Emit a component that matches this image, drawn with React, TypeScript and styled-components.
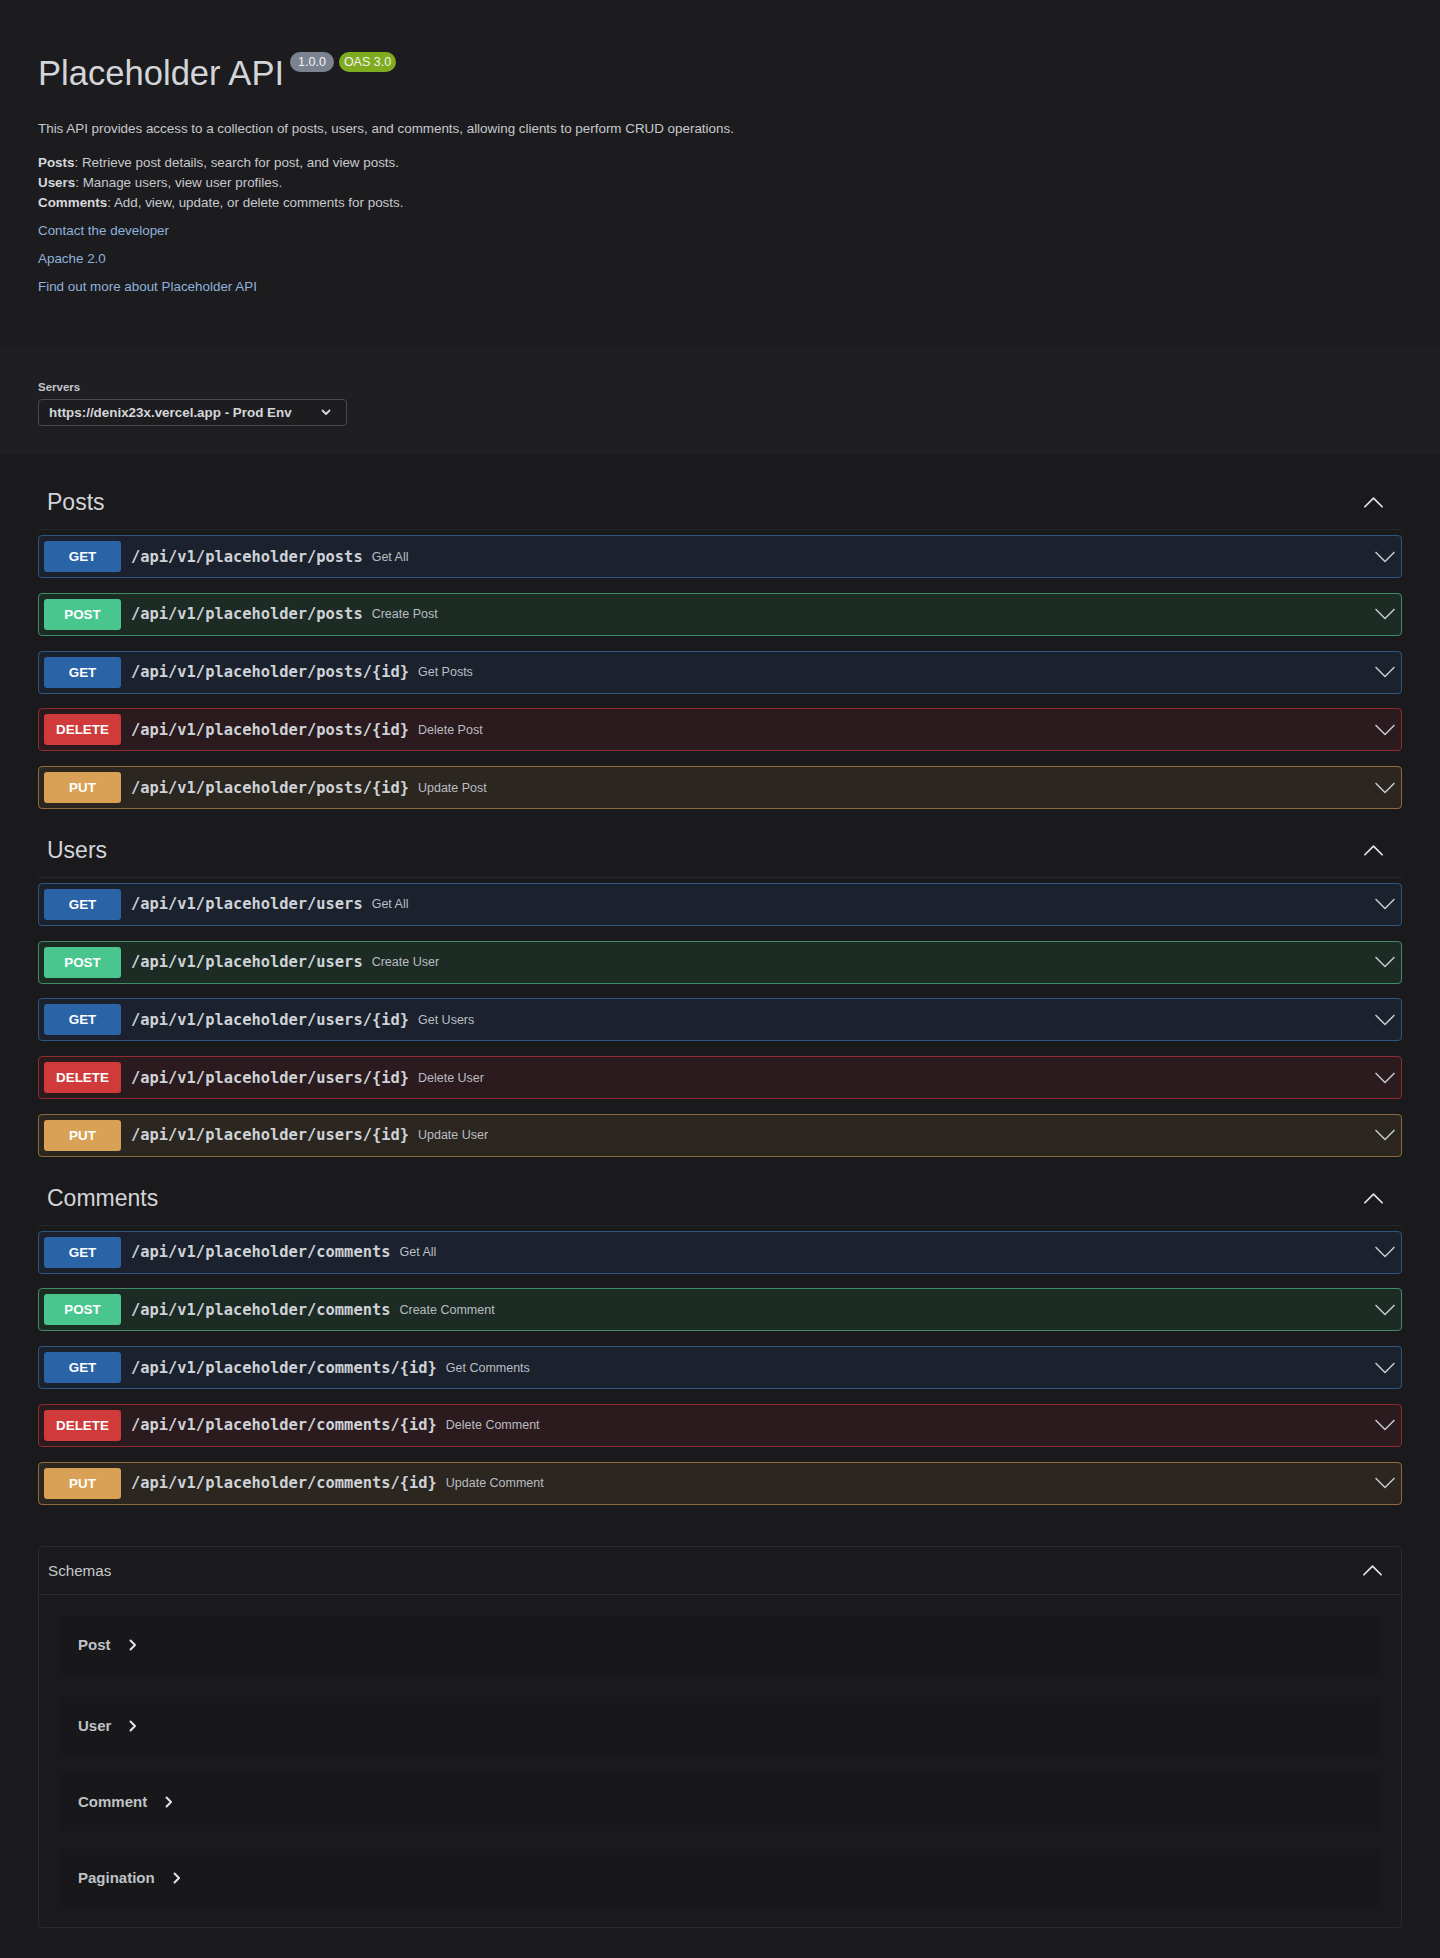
import React from "react";
import styled, { createGlobalStyle } from "styled-components";

const GlobalStyle = createGlobalStyle`
  html, body { margin: 0; padding: 0; }
  body {
    background: #1a1a1c;
    font-family: "Liberation Sans", Arial, sans-serif;
    color: #c8cacf;
  }
  * { box-sizing: border-box; }
`;

type Method = "GET" | "POST" | "DELETE" | "PUT";

const METHOD_COLORS: Record<Method, { bg: string; border: string; badge: string }> = {
  GET: { bg: "#1b222e", border: "#2f5681", badge: "#2a64a6" },
  POST: { bg: "#1d2b25", border: "#3e8d68", badge: "#48c68d" },
  DELETE: { bg: "#2b1b1e", border: "#8e2c31", badge: "#d03a3b" },
  PUT: { bg: "#2b2720", border: "#8e6b3d", badge: "#d9a155" },
};

const Page = styled.div`
  width: 1440px;
  min-height: 1958px;
  background: #1a1a1c;
`;

const InfoSection = styled.section`
  background: #1c1c1f;
  padding: 52px 38px 49px;
`;

const TitleRow = styled.div`
  display: flex;
  align-items: flex-start;
  gap: 5px;
`;

const Title = styled.h2`
  margin: 4px 1px 0 0;
  font-size: 34.6px;
  line-height: 35px;
  font-weight: 400;
  color: #d3d5d9;
`;

const VersionBadge = styled.span<{ $tone: "gray" | "green" }>`
  display: inline-flex;
  align-items: center;
  height: 20px;
  padding: 0 ${(p) => (p.$tone === "gray" ? "8px" : "5px")};
  border-radius: 10px;
  font-size: 12.5px;
  color: #f2f2f2;
  background: ${(p) => (p.$tone === "gray" ? "#7c8390" : "#7fac1f")};
`;

const Description = styled.p`
  margin: 28px 0 14px;
  font-size: 13.4px;
  line-height: 20px;
  color: #c7c9cd;
`;

const TagList = styled.div`
  font-size: 13.4px;
  line-height: 20px;
  color: #c7c9cd;

  b {
    color: #d6d8dc;
  }
`;

const InfoLink = styled.a`
  display: block;
  margin-top: 8px;
  font-size: 13.4px;
  line-height: 20px;
  color: #8fb1dc;
  text-decoration: none;
`;

const ServersBand = styled.section`
  background: #1f1f23;
  padding: 33px 38px 29px;
`;

const ServersLabel = styled.div`
  font-size: 11.5px;
  line-height: 16px;
  font-weight: 700;
  color: #c3c5ca;
  margin-bottom: 4px;
`;

const ServerSelect = styled.div`
  width: 309px;
  height: 27px;
  display: flex;
  align-items: center;
  justify-content: space-between;
  padding: 0 15px 0 10px;
  border: 1px solid #494b51;
  border-radius: 4px;
  background: #1d1d20;
  font-size: 13.4px;
  font-weight: 700;
  color: #d4d6da;
`;

const Main = styled.main`
  padding: 21px 38px 30px;
`;

const TagSection = styled.section``;

const TagHeading = styled.div`
  height: 54px;
  display: flex;
  align-items: center;
  justify-content: space-between;
  padding: 0 17px 0 9px;
  border-bottom: 1px solid rgba(80, 84, 96, 0.25);
  margin-bottom: 5px;
`;

const TagName = styled.h3`
  margin: 0;
  font-size: 23px;
  font-weight: 400;
  color: #d2d4d8;
`;

const TagArrow = styled.span`
  display: flex;
  color: #e4e5e8;
`;

const OpRow = styled.div<{ $method: Method }>`
  height: 43px;
  display: flex;
  align-items: center;
  padding: 0 4px 0 5px;
  margin-bottom: 14.75px;
  border: 1px solid ${(p) => METHOD_COLORS[p.$method].border};
  border-radius: 4px;
  background: ${(p) => METHOD_COLORS[p.$method].bg};
`;

const MethodBadge = styled.span<{ $method: Method }>`
  width: 77px;
  height: 31px;
  flex: none;
  display: flex;
  align-items: center;
  justify-content: center;
  border-radius: 3px;
  background: ${(p) => METHOD_COLORS[p.$method].badge};
  color: #ffffff;
  font-size: 13.4px;
  font-weight: 700;
`;

const OpPath = styled.span`
  margin-left: 10px;
  font-family: "DejaVu Sans Mono", "Liberation Mono", monospace;
  font-weight: 700;
  font-size: 15.4px;
  color: #cfd2d7;
`;

const OpSummary = styled.span`
  margin-left: 9px;
  font-size: 12.5px;
  color: #babdc2;
`;

const RowArrow = styled.span`
  margin-left: auto;
  display: flex;
  color: #c4c7cc;
`;

const Models = styled.section`
  margin-top: 41px;
  border: 1px solid #2a2b2f;
  border-radius: 4px;
`;

const ModelsHeader = styled.div`
  height: 48px;
  display: flex;
  align-items: center;
  justify-content: space-between;
  padding: 0 17px 0 9px;
  border-bottom: 1px solid #2a2b2f;
`;

const ModelsTitle = styled.h4`
  margin: 0;
  font-size: 15.2px;
  font-weight: 400;
  color: #c6c8cc;
`;

const ModelList = styled.div`
  padding: 21px 20px 20px;
  display: flex;
  flex-direction: column;
  gap: 18px;

  & > :first-child {
    margin-bottom: 5px;
  }
`;

const ModelItem = styled.div`
  height: 58px;
  display: flex;
  align-items: center;
  gap: 17px;
  padding-left: 19px;
  border-radius: 4px;
  background: rgba(0, 0, 0, 0.05);
`;

const ModelName = styled.span`
  font-size: 15px;
  font-weight: 700;
  color: #bfc2c7;
`;

const ModelArrow = styled.span`
  display: flex;
  color: #e4e5e8;
`;

const Chevron = ({ dir, size, width = 1.4 }: { dir: "up" | "down"; size: number; width?: number }) => (
  <svg width={size} height={size} viewBox="0 0 20 20" fill="none">
    <polyline
      points={dir === "down" ? "2.5,6.2 10,13.7 17.5,6.2" : "2.5,13.7 10,6.2 17.5,13.7"}
      stroke="currentColor"
      strokeWidth={width}
      strokeLinecap="round"
      strokeLinejoin="round"
    />
  </svg>
);

const SelectChevron = () => (
  <svg width="10" height="7" viewBox="0 0 10 7" fill="none">
    <polyline points="1.5,1.5 5,5 8.5,1.5" stroke="#d8dadf" strokeWidth="1.8" strokeLinecap="round" strokeLinejoin="round" />
  </svg>
);

const RightChevron = () => (
  <svg width="10" height="14" viewBox="0 0 10 14" fill="none">
    <polyline points="2.5,2.5 7,7 2.5,11.5" stroke="currentColor" strokeWidth="2" strokeLinecap="round" strokeLinejoin="round" />
  </svg>
);

type Op = { method: Method; path: string; summary: string };

const mk = (base: string, noun: string, plural: string): Op[] => [
  { method: "GET", path: `/api/v1/placeholder/${base}`, summary: "Get All" },
  { method: "POST", path: `/api/v1/placeholder/${base}`, summary: `Create ${noun}` },
  { method: "GET", path: `/api/v1/placeholder/${base}/{id}`, summary: `Get ${plural}` },
  { method: "DELETE", path: `/api/v1/placeholder/${base}/{id}`, summary: `Delete ${noun}` },
  { method: "PUT", path: `/api/v1/placeholder/${base}/{id}`, summary: `Update ${noun}` },
];

const TAGS: { name: string; ops: Op[] }[] = [
  { name: "Posts", ops: mk("posts", "Post", "Posts") },
  { name: "Users", ops: mk("users", "User", "Users") },
  { name: "Comments", ops: mk("comments", "Comment", "Comments") },
];

const SCHEMAS = ["Post", "User", "Comment", "Pagination"];

export default function App() {
  return (
    <Page>
      <GlobalStyle />
      <InfoSection>
        <TitleRow>
          <Title>Placeholder API</Title>
          <VersionBadge $tone="gray">1.0.0</VersionBadge>
          <VersionBadge $tone="green">OAS 3.0</VersionBadge>
        </TitleRow>
        <Description>
          This API provides access to a collection of posts, users, and comments, allowing clients to perform CRUD operations.
        </Description>
        <TagList>
          <div>
            <b>Posts</b>: Retrieve post details, search for post, and view posts.
          </div>
          <div>
            <b>Users</b>: Manage users, view user profiles.
          </div>
          <div>
            <b>Comments</b>: Add, view, update, or delete comments for posts.
          </div>
        </TagList>
        <InfoLink href="#">Contact the developer</InfoLink>
        <InfoLink href="#">Apache 2.0</InfoLink>
        <InfoLink href="#">Find out more about Placeholder API</InfoLink>
      </InfoSection>

      <ServersBand>
        <ServersLabel>Servers</ServersLabel>
        <ServerSelect>
          <span>https://denix23x.vercel.app - Prod Env</span>
          <SelectChevron />
        </ServerSelect>
      </ServersBand>

      <Main>
        {TAGS.map((tag) => (
          <TagSection key={tag.name}>
            <TagHeading>
              <TagName>{tag.name}</TagName>
              <TagArrow>
                <Chevron dir="up" size={23} width={1.5} />
              </TagArrow>
            </TagHeading>
            {tag.ops.map((op) => (
              <OpRow key={op.method + op.path} $method={op.method}>
                <MethodBadge $method={op.method}>{op.method}</MethodBadge>
                <OpPath>{op.path}</OpPath>
                <OpSummary>{op.summary}</OpSummary>
                <RowArrow>
                  <Chevron dir="down" size={24} width={1.3} />
                </RowArrow>
              </OpRow>
            ))}
          </TagSection>
        ))}

        <Models>
          <ModelsHeader>
            <ModelsTitle>Schemas</ModelsTitle>
            <ModelArrow>
              <Chevron dir="up" size={23} width={1.5} />
            </ModelArrow>
          </ModelsHeader>
          <ModelList>
            {SCHEMAS.map((s) => (
              <ModelItem key={s}>
                <ModelName>{s}</ModelName>
                <ModelArrow>
                  <RightChevron />
                </ModelArrow>
              </ModelItem>
            ))}
          </ModelList>
        </Models>
      </Main>
    </Page>
  );
}
